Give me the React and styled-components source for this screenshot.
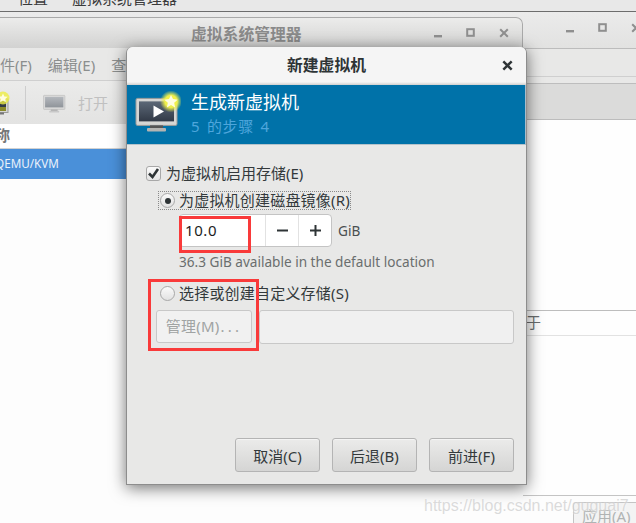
import React from "react";
import styled, { createGlobalStyle } from "styled-components";

const Global = createGlobalStyle`
  html, body { margin: 0; padding: 0; background: #e8e8e7; }
  * { box-sizing: border-box; }
`;

const Desktop = styled.div`
  position: relative;
  width: 636px;
  height: 523px;
  overflow: hidden;
  background: #e8e8e7;
  font-family: "Noto Sans", "Noto Sans CJK SC", sans-serif;
  font-size: 15px;
  color: #2e3436;
`;

const TopBar = styled.div`
  height: 12px;
  background: #e8e8e8;
  border-bottom: 1px solid #6d6d6d;
  display: flex;
  align-items: flex-end;
  gap: 24px;
  padding-left: 18px;
  overflow: hidden;
  color: #3a3a3a;
  line-height: 20px;
  & > span { flex: none; height: 20px; margin-bottom: 3px; }
`;

/* Background window on the right */
const BackWindow = styled.section`
  position: absolute;
  left: 0; top: 12px; width: 660px; height: 511px;
  display: flex; flex-direction: column;
  background: #fff;
`;
const BackTitle = styled.div`
  height: 37px;
  flex: none;
  background: linear-gradient(#ebebeb, #e2e2e1);
  border-bottom: 1px solid #bcbcbc;
  display: flex; justify-content: flex-end; align-items: center;
  padding: 0 19px 5px 0;
  gap: 23px;
  color: #8f8f8f;
`;
const BackMenu = styled.div`
  height: 28px; flex: none;
  background: #e8e8e7;
  border-bottom: 1px solid #cfcfcf;
`;
const BackBand = styled.div`
  height: 43px; flex: none;
  background: linear-gradient(#e8e8e7 0 6px, #bdbdbd 6px 7px, #dbdbda 7px);
  border-bottom: 1px solid #bcbcbc;
`;
const BackContent = styled.div`
  flex: 1;
  display: flex; flex-direction: column;
  padding-top: 190px;
  padding-left: 500px;
  background: #fefefe;
`;
const BackRow = styled.div`
  height: 26px;
  border-top: 1px solid #bdbdbd;
  border-bottom: 1px solid #e2e2e2;
  color: #6a6e6e;
  line-height: 23px;
  padding-left: 26px;
`;
const BackFooter = styled.div`
  height: 28px; flex: none;
  margin-left: 522px;
  border-top: 1px solid #c4c4c4;
  border-left: 1px solid #bdbdbd;
  padding: 6px 0 0 50px;
  background: #fdfdfd;
`;
const ApplyButton = styled.div`
  width: 70px; height: 30px;
  border: 1px solid #c4c4c4;
  border-radius: 3px 0 0 0;
  background: #f3f3f3;
  color: #b0b3b3;
  padding-left: 8px;
  line-height: 26px;
  white-space: nowrap;
`;

/* Manager window */
const ManagerWindow = styled.section`
  position: absolute;
  left: -20px; top: 17px; width: 543px; height: 506px;
  display: flex; flex-direction: column;
  background: #fdfdfd;
  border-radius: 0 7px 0 0;
`;
const ManagerTitle = styled.header`
  height: 31px; flex: none;
  position: relative;
  display: flex; align-items: center; justify-content: flex-end;
  border: 1px solid #a9a9a9;
  border-width: 1px 1px 0 0;
  border-radius: 0 7px 0 0;
  background: linear-gradient(#ececeb, #d2d2d1);
  padding-right: 13px;
  gap: 23px;
  color: #8f8f8f;
`;
const ManagerName = styled.h1`
  position: absolute;
  left: 211px; top: 6px;
  margin: 0;
  width: 112px;
  font-size: 15.8px;
  line-height: 20px;
  font-weight: 700;
  color: #8a8a8a;
  white-space: nowrap;
`;
const MenuBar = styled.nav`
  height: 33px; flex: none;
  display: flex; align-items: center; gap: 16px;
  padding-left: 5px;
  background: #e8e8e7;
  border-bottom: 1px solid #cfcfcf;
  color: #8b8e8e;
  white-space: nowrap;
`;
const Toolbar = styled.div`
  height: 43px; flex: none;
  display: flex; align-items: center;
  padding-left: 6px;
  background: linear-gradient(#ebebea, #e3e3e2);
  color: #c0c0c0;
`;
const ToolSeparator = styled.div`
  width: 1px; height: 34px;
  background: #cdcdcd;
  margin: 0 17px;
`;
const ToolLabel = styled.span`
  margin-left: 11px;
`;
const ListHeader = styled.div`
  height: 25px; flex: none;
  font-weight: 700;
  color: #777;
  background: #fff;
  border-bottom: 1px solid #d2d2d2;
  line-height: 23px;
`;
const ListRow = styled.div`
  height: 30px; flex: none;
  background: #4a90d9;
  color: #eaf2fb;
  font-size: 11.7px;
  line-height: 29px;
  padding-left: 15px;
`;

/* Dialog */
const Dialog = styled.section`
  position: absolute;
  left: 126px; top: 47px; width: 401px; height: 438px;
  display: flex; flex-direction: column;
  background: #e8e8e7;
  border: 1px solid #8d8d8d;
  border-top: 0;
  border-radius: 6px 6px 0 0;
  box-shadow: 0 3px 16px rgba(0,0,0,.55);
`;
const DialogTitle = styled.header`
  height: 38px; flex: none;
  position: relative;
  display: flex; align-items: center; justify-content: center;
  background: linear-gradient(#f5f5f5 0 35px, #cfcfce);
  border-radius: 6px 6px 0 0;
  padding-bottom: 3px;
  font-size: 15.8px;
  font-weight: 700;
  color: #2e3436;
`;
const CloseSlot = styled.span`
  position: absolute; right: 13px; top: 13px;
  display: flex;
`;
const Banner = styled.div`
  height: 60px; flex: none;
  display: flex; align-items: flex-start;
  padding: 5px 0 0 8px;
  background: #0072a9;
  border-bottom: 1px solid #b5c3cb;
  border-right: 1px solid #a6bccb;
`;
const BannerText = styled.div`
  margin-left: 10px;
  display: flex; flex-direction: column;
`;
const BannerTitle = styled.div`
  font-size: 18px;
  line-height: 24px;
  color: #fff;
`;
const BannerSub = styled.div`
  font-size: 15px;
  line-height: 22px;
  margin-top: 1px;
  color: #4ea6dc;
  letter-spacing: .7px;
  word-spacing: 2px;
`;
const Body = styled.div`
  flex: 1;
  display: flex; flex-direction: column;
  padding: 20px 12px 12px 19px;
`;
const CheckRow = styled.div`
  height: 16px;
  display: flex; align-items: center; gap: 5px;
  white-space: nowrap;
  color: #33393b;
`;
const CheckBox = styled.span`
  width: 15px; height: 15px; flex: none;
  border: 1px solid #a8a8a8;
  border-radius: 3px;
  background: linear-gradient(#fafafa, #e4e4e4);
  display: flex; align-items: center; justify-content: center;
`;
const OptionLabel = styled.span`
  margin-top: -2px;
  letter-spacing: ${p => p.$spread ? ".2px" : "0"};
`;
const RadioRow = styled.div`
  display: flex; align-items: center; gap: 4px;
  height: 17px;
  width: ${p => p.$focus ? "191px" : "auto"};
  margin: ${p => p.$top}px 0 0 13px;
  outline: ${p => p.$focus ? "1px dotted #8a8a8a" : "none"};
  white-space: nowrap;
  color: #33393b;
`;
const Radio = styled.span`
  width: 15px; height: 15px; flex: none;
  margin-left: 1px;
  border: 1px solid #a8a8a8;
  border-radius: 50%;
  background: linear-gradient(#fafafa, #e2e2e2);
  display: flex; align-items: center; justify-content: center;
  &::after {
    content: "";
    display: ${p => p.$on ? "block" : "none"};
    width: 6px; height: 6px; border-radius: 50%;
    background: #2e3436;
  }
`;
const SizeRow = styled.div`
  display: flex; align-items: center;
  margin: 5px 0 0 33px;
`;
const Spin = styled.div`
  width: 153px; height: 33px;
  display: flex;
  background: #fff;
  border: 1px solid #c4c4c4;
  border-radius: 4px;
  overflow: hidden;
`;
const SpinValue = styled.div`
  flex: 1;
  padding-left: 5px;
  line-height: 30px;
  letter-spacing: .6px;
  color: #1d1d1d;
`;
const SpinButton = styled.div`
  width: 33px;
  border-left: 1px solid #e2e2e2;
  display: flex; align-items: center; justify-content: center;
`;
const Unit = styled.span`
  margin-left: 6px;
  color: #4a4f50;
  font-size: 13.6px;
`;
const Hint = styled.div`
  margin: 5px 0 0 33px;
  line-height: 20px;
  font-size: 13.6px;
  color: #6a6e6e;
  white-space: nowrap;
`;
const StoreRow = styled.div`
  display: flex; gap: 7px;
  margin: 8px 0 0 10px;
  height: 34px;
`;
const ManageButton = styled.div`
  width: 96px; height: 33px;
  border: 1px solid #c8c8c8;
  border-radius: 3px;
  background: #f1f1f1;
  color: #a0a3a3;
  line-height: 31px;
  text-align: center;
  letter-spacing: .2px;
  white-space: nowrap;
`;
const Dots = styled.span`
  letter-spacing: 3.2px;
  margin-left: 1px;
`;
const PathEntry = styled.div`
  flex: 1;
  border: 1px solid #c8c8c8;
  border-radius: 3px;
  background: #f0f0f0;
`;
const Actions = styled.footer`
  margin-top: auto;
  display: flex; justify-content: flex-end; gap: 12px;
`;
const ActionButton = styled.button`
  width: 85px; height: 34px;
  padding: 0;
  border: 1px solid #b4b4b4;
  border-radius: 3px;
  background: linear-gradient(#ebebea, #d5d5d4);
  font: inherit;
  color: #33393b;
  box-shadow: inset 0 1px #f4f4f4;
`;

/* Overlays */
const Mark = styled.div`
  position: absolute;
  left: ${p => p.$x}px; top: ${p => p.$y}px;
  width: ${p => p.$w}px; height: ${p => p.$h}px;
  border: 3px solid #f93a3a;
  pointer-events: none;
`;
const Watermark = styled.div`
  position: absolute;
  left: 424px; top: 496px;
  font-family: "Liberation Sans", sans-serif;
  font-size: 16px;
  line-height: 20px;
  color: rgba(195,195,195,.6);
  text-shadow: 0 0 2px rgba(255,255,255,.8);
  white-space: nowrap;
`;

const Minimize = ({ c = "#8f8f8f" }) => (
  <svg width="10" height="10" viewBox="0 0 10 10"><rect x="1" y="7" width="8" height="2.400" fill={c} /></svg>
);
const Maximize = ({ c = "#8f8f8f" }) => (
  <svg width="10" height="10" viewBox="0 0 10 10"><rect x="1.200" y="1.200" width="6.600" height="6.600" fill="none" stroke={c} strokeWidth="2" /></svg>
);
const Close = ({ c = "#8f8f8f", s = 10, w = 2 }) => (
  <svg width={s} height={s} viewBox="0 0 10 10"><path d="M1.200 1.200l7.600 7.600M8.800 1.200L1.200 8.800" stroke={c} strokeWidth={w} fill="none" /></svg>
);

const Monitor = ({ size = 44, disabled, id }) => (
  <svg width={size} height={size * 0.93} viewBox="0 0 46 42" style={{ flex: "none" }}>
    <defs>
      <linearGradient id={`scr${id}`} x1="0" y1="0" x2="0" y2="1">
        <stop offset="0" stopColor={disabled ? "#b4b8bd" : "#5c6877"} />
        <stop offset="1" stopColor={disabled ? "#8f949a" : "#323a47"} />
      </linearGradient>
      <radialGradient id={`glow${id}`}>
        <stop offset=".55" stopColor="#f0f04a" />
        <stop offset="1" stopColor="#e8ee50" stopOpacity="0" />
      </radialGradient>
    </defs>
    <rect x="1" y="8" width="41" height="27" rx="1.500" fill={disabled ? "#d9d9d9" : "#d6d6d4"} stroke={disabled ? "#b5b5b5" : "#9b9b99"} />
    <rect x="4" y="11" width="35" height="20" fill={`url(#scr${id})`} />
    <rect x="15" y="35" width="13" height="3" fill={disabled ? "#b0b0b0" : "#555"} />
    <rect x="12" y="37.500" width="19" height="3.500" rx="1" fill={disabled ? "#c8c8c8" : "#b4b4b2"} />
    {!disabled && <path d="M18.500 15v12l10.500-6z" fill="#fff" />}
    {!disabled && <g>
      <circle cx="36" cy="11" r="11" fill={`url(#glow${id})`} />
      <path d="M36 4.500l2 4.200 4.600.6-3.400 3.100.9 4.600-4.100-2.300-4.100 2.300.9-4.600-3.400-3.100 4.600-.6z" fill="#fffde0" />
    </g>}
  </svg>
);

const ToolIcon = styled.div`
  width: 22px; height: 24px; flex: none;
  display: flex; align-items: center;
  overflow: visible;
`;

const NewIcon = () => (
  <svg width="24" height="24" viewBox="0 0 24 24" style={{ flex: "none" }}>
    <rect x="-2" y="8" width="24" height="13.500" fill="#d6d6d4" stroke="#9b9b99" />
    <rect x="0" y="10" width="20" height="10" fill="#323a47" />
    <rect x="0" y="16" width="20" height="4" fill="#8a8a2a" />
    <rect x="6" y="21.500" width="12" height="2" fill="#777" />
    <circle cx="17" cy="7" r="6.500" fill="#eeee44" opacity=".8" />
    <path d="M17 2.500l1.400 2.900 3.200.4-2.300 2.200.6 3.200-2.900-1.600-2.900 1.600.6-3.200-2.300-2.200 3.200-.4z" fill="#fffde0" />
  </svg>
);

export default function App() {
  return (
    <Desktop>
      <Global />
      <TopBar><span>位置</span><span>虚拟系统管理器</span></TopBar>
      <BackWindow>
        <BackTitle>
          <Minimize /><Maximize /><Close />
        </BackTitle>
        <BackMenu />
        <BackBand />
        <BackContent>
          <BackRow>于</BackRow>
        </BackContent>
        <BackFooter><ApplyButton>应用(A)</ApplyButton></BackFooter>
      </BackWindow>

      <ManagerWindow>
        <ManagerTitle>
          <ManagerName>虚拟系统管理器</ManagerName>
          <Minimize /><Maximize /><Close />
        </ManagerTitle>
        <MenuBar>
          <span>文件(F)</span><span>编辑(E)</span><span>查看(V)</span><span>帮助(H)</span>
        </MenuBar>
        <Toolbar>
          <ToolIcon><NewIcon /></ToolIcon>
          <ToolSeparator />
          <Monitor size={24} disabled id="t" />
          <ToolLabel>打开</ToolLabel>
        </Toolbar>
        <ListHeader>名称</ListHeader>
        <ListRow>QEMU/KVM</ListRow>
      </ManagerWindow>

      <Dialog>
        <DialogTitle>
          新建虚拟机
          <CloseSlot><Close c="#2e3436" s={11} w={2.2} /></CloseSlot>
        </DialogTitle>
        <Banner>
          <Monitor size={46} id="b" />
          <BannerText>
            <BannerTitle>生成新虚拟机</BannerTitle>
            <BannerSub>5 的步骤 4</BannerSub>
          </BannerText>
        </Banner>
        <Body>
          <CheckRow>
            <CheckBox>
              <svg width="13" height="13" viewBox="0 0 13 13"><path d="M2 6.500l3.500 3.500 5.500-8" fill="none" stroke="#2e3436" strokeWidth="2.600" /></svg>
            </CheckBox>
            <OptionLabel>为虚拟机启用存储(E)</OptionLabel>
          </CheckRow>
          <RadioRow $top={11} $focus>
            <Radio $on /><OptionLabel $spread>为虚拟机创建磁盘镜像(R)</OptionLabel>
          </RadioRow>
          <SizeRow>
            <Spin>
              <SpinValue>10.0</SpinValue>
              <SpinButton><svg width="11" height="11" viewBox="0 0 11 11"><rect x="0" y="4.500" width="11" height="2" fill="#2e3436" /></svg></SpinButton>
              <SpinButton><svg width="11" height="11" viewBox="0 0 11 11"><path d="M0 4.500h4.500V0h2v4.500H11v2H6.500V11h-2V6.500H0z" fill="#2e3436" /></svg></SpinButton>
            </Spin>
            <Unit>GiB</Unit>
          </SizeRow>
          <Hint>36.3 GiB available in the default location</Hint>
          <RadioRow $top={13}>
            <Radio /><OptionLabel $spread>选择或创建自定义存储(S)</OptionLabel>
          </RadioRow>
          <StoreRow>
            <ManageButton>管理(M)<Dots>...</Dots></ManageButton>
            <PathEntry />
          </StoreRow>
          <Actions>
            <ActionButton>取消(C)</ActionButton>
            <ActionButton>后退(B)</ActionButton>
            <ActionButton>前进(F)</ActionButton>
          </Actions>
        </Body>
      </Dialog>

      <Mark $x={179} $y={216} $w={72} $h={37} />
      <Mark $x={148} $y={279} $w={111} $h={72} />
      <Watermark>https://blog.csdn.net/guguai7</Watermark>
    </Desktop>
  );
}
